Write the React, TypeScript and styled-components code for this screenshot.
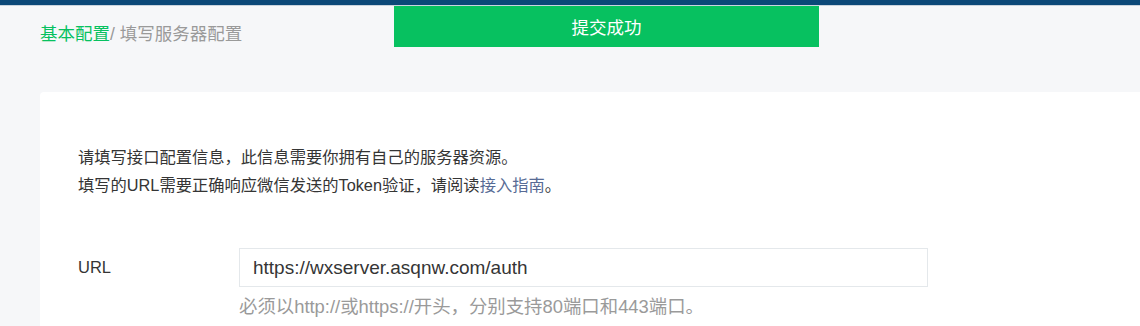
import styled, { createGlobalStyle } from "styled-components";

const GlobalStyle = createGlobalStyle`
  html, body {
    margin: 0;
    padding: 0;
    background: #f6f7f9;
    overflow: hidden;
  }
  body {
    font-family: "Liberation Sans", "Noto Sans CJK SC", sans-serif;
    color: #353535;
  }
`;

const Page = styled.div`
  position: relative;
  width: 1200px;
  min-height: 326px;
`;

const TopBar = styled.div`
  height: 5px;
  background: #0b4878;
  border-bottom: 1px solid #c9d3dd;
`;

const Toast = styled.div`
  position: absolute;
  top: 6px;
  left: 394px;
  width: 425px;
  height: 41px;
  background: #07c160;
  color: #fff;
  font-size: 17.5px;
  display: flex;
  align-items: center;
  justify-content: center;
`;

const Breadcrumb = styled.div`
  padding: 16px 40px 0;
  height: 70px;
  font-size: 17.5px;
  line-height: 24px;
  color: #9a9a9a;
`;

const Crumb = styled.span`
  color: #07c160;
`;

const Card = styled.div`
  margin-left: 40px;
  background: #fff;
  border-radius: 4px 0 0 0;
  padding: 51px 38px 40px;
`;

const Intro = styled.p`
  margin: 0 0 49px;
  font-size: 16.3px;
  line-height: 28px;
`;

const Link = styled.a`
  color: #576b95;
  text-decoration: none;
`;

const FormRow = styled.div`
  display: flex;
  align-items: flex-start;
`;

const Label = styled.label`
  width: 161px;
  flex-shrink: 0;
  font-size: 16.5px;
  line-height: 39px;
`;

const Field = styled.div`
  display: flex;
  flex-direction: column;
`;

const Input = styled.input`
  box-sizing: border-box;
  width: 689px;
  height: 39px;
  border: 1px solid #e4e8eb;
  padding: 0 13px;
  font-family: inherit;
  font-size: 19px;
  color: #353535;
  outline: none;
`;

const Hint = styled.div`
  margin-top: 8px;
  font-size: 18.4px;
  line-height: 24px;
  color: #9a9a9a;
`;

export default function App() {
  return (
    <Page>
      <GlobalStyle />
      <TopBar />
      <Toast>提交成功</Toast>
      <Breadcrumb>
        <Crumb>基本配置</Crumb>/ 填写服务器配置
      </Breadcrumb>
      <Card>
        <Intro>
          请填写接口配置信息，此信息需要你拥有自己的服务器资源。
          <br />
          填写的URL需要正确响应微信发送的Token验证，请阅读<Link href="#">接入指南</Link>。
        </Intro>
        <FormRow>
          <Label>URL</Label>
          <Field>
            <Input defaultValue="https://wxserver.asqnw.com/auth" />
            <Hint>必须以http://或https://开头，分别支持80端口和443端口。</Hint>
          </Field>
        </FormRow>
      </Card>
    </Page>
  );
}
